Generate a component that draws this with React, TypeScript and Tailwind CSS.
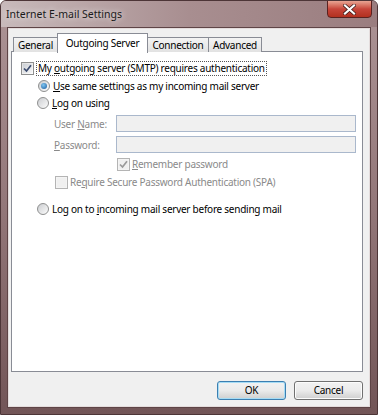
import React from "react";

const font = { fontFamily: '"Noto Sans", "Open Sans", sans-serif' };

function Check({ checked, disabled }: { checked?: boolean; disabled?: boolean }) {
  return (
    <div
      className={`w-[13px] h-[13px] shrink-0 border flex items-center justify-center ${
        disabled ? "border-[#b4b4b4] bg-[#f4f4f4]" : "border-[#8e8f8f] bg-gradient-to-br from-[#dcdcdc] to-[#ffffff]"
      }`}
    >
      <div className={`w-[9px] h-[9px] flex items-center justify-center ${disabled ? "bg-[#f0f0f0]" : "bg-gradient-to-br from-[#cbcfd5] to-[#f6f6f6]"}`}>
        {checked && (
          <svg width="9" height="9" viewBox="0 0 9 9">
            <path d="M1 4.5 L3.5 7 L8 1.2" fill="none" stroke={disabled ? "#9a9a9a" : "#3b4b6e"} strokeWidth="1.7" />
          </svg>
        )}
      </div>
    </div>
  );
}

function Radio({ checked }: { checked?: boolean }) {
  return (
    <div className="w-[12px] h-[12px] shrink-0 rounded-full border border-[#8e8f8f] bg-gradient-to-br from-[#c9cbce] to-[#ffffff] flex items-center justify-center">
      {checked ? (
        <div className="w-[6px] h-[6px] rounded-full bg-[radial-gradient(circle_at_40%_35%,#7fc6f2,#1b5a9c)]" />
      ) : (
        <div className="w-[8px] h-[8px] rounded-full bg-gradient-to-br from-[#d0d2d5] to-[#f7f7f7]" />
      )}
    </div>
  );
}

export default function App() {
  return (
    <div
      style={font}
      className="w-[378px] h-[415px] flex flex-col bg-gradient-to-b from-[#ad9496] via-[#937779] to-[#725557] border border-[#4d3537] rounded-t-[6px] overflow-hidden"
    >
      {/* title bar */}
      <div className="h-[26px] shrink-0 flex items-start bg-gradient-to-r from-[#c8babb] via-[#a88e90] to-[#9a7d7f]">
        <div className="pl-[5px] pt-[6px] text-[10.5px] leading-[14px] text-[#1a1a1a] whitespace-nowrap [text-shadow:0_0_6px_#ffffff]">
          Internet E-mail Settings
        </div>
        <div className="flex-1" />
        <div className="mr-[5px] -mt-[1px] w-[45px] h-[18px] rounded-b-[4px] border border-[#5a2220] bg-gradient-to-b from-[#e8a493] via-[#c7453a] to-[#b2301f] flex items-center justify-center">
          <svg width="13" height="11" viewBox="0 0 13 11">
            <path d="M2 1.5 L11 9.5 M11 1.5 L2 9.5" stroke="#3a1a18" strokeWidth="3.6" strokeLinecap="square" />
            <path d="M2 1.5 L11 9.5 M11 1.5 L2 9.5" stroke="#ffffff" strokeWidth="2.2" strokeLinecap="square" />
          </svg>
        </div>
      </div>

      {/* client */}
      <div className="flex-1 ml-[6px] mr-[6px] mb-[6px] border border-[#5e4446] flex">
        <div className="flex-1 bg-[#f0f0f0] border border-[#e4dcdc] flex flex-col pl-[2px] pr-[6px] pt-[3px] text-[10px] tracking-[-0.25px]">
          {/* tabs */}
          <div className="h-[20px] flex items-end pl-[2px] relative z-10">
            <div className="w-[44px] h-[15px] border border-b-0 border-r-0 border-[#898c95] bg-gradient-to-b from-[#f4f4f4] to-[#e2e2e2] flex items-center justify-center leading-[13px] whitespace-nowrap">
              General
            </div>
            <div className="w-[91px] h-[20px] -mb-[1px] border border-b-0 border-[#898c95] bg-white flex items-start justify-center pt-[2px] leading-[14px] whitespace-nowrap">
              Outgoing Server
            </div>
            <div className="w-[61px] h-[15px] border border-b-0 border-l-0 border-[#898c95] bg-gradient-to-b from-[#f4f4f4] to-[#e2e2e2] flex items-center justify-center leading-[13px] whitespace-nowrap">
              Connection
            </div>
            <div className="w-[53px] h-[15px] border border-b-0 border-l-0 border-[#898c95] bg-gradient-to-b from-[#f4f4f4] to-[#e2e2e2] flex items-center justify-center leading-[13px] whitespace-nowrap">
              Advanced
            </div>
          </div>
          {/* panel */}
          <div className="h-[321px] -mt-[1px] border border-[#898c95] bg-white flex flex-col leading-[14px] text-black whitespace-nowrap">
            <div className="mt-[8px] ml-[9px] h-[16px] flex items-center">
              <Check checked />
              <div className="ml-[2px] px-[1px] border border-dotted border-[#555] leading-[13px]">
                My <span className="underline">o</span>utgoing server (SMTP) requires authentication
              </div>
            </div>
            <div className="mt-[2px] ml-[26px] h-[16px] flex items-center">
              <Radio checked />
              <div className="ml-[3px]">
                <span className="underline">U</span>se same settings as my incoming mail server
              </div>
            </div>
            <div className="mt-[1px] ml-[25px] h-[16px] flex items-center">
              <Radio />
              <div className="ml-[3px]">
                <span className="underline">L</span>og on using
              </div>
            </div>
            <div className="mt-[4px] ml-[42px] mr-[6px] h-[17px] flex items-center">
              <div className="w-[62px] text-[#8a8a8a]">
                User <span className="underline">N</span>ame:
              </div>
              <div className="flex-1 h-[17px] border border-[#aab8cc] bg-[#f0f0f0]" />
            </div>
            <div className="mt-[4px] ml-[42px] mr-[6px] h-[17px] flex items-center">
              <div className="w-[62px] text-[#8a8a8a]">
                <span className="underline">P</span>assword:
              </div>
              <div className="flex-1 h-[17px] border border-[#aab8cc] bg-[#f0f0f0]" />
            </div>
            <div className="mt-[3px] ml-[105px] h-[16px] flex items-center">
              <Check checked disabled />
              <div className="ml-[2px] text-[#8a8a8a]">
                <span className="underline">R</span>emember password
              </div>
            </div>
            <div className="mt-[2px] ml-[43px] h-[16px] flex items-center">
              <Check disabled />
              <div className="ml-[2px] text-[#8a8a8a]">
                Re<span className="underline">q</span>uire Secure Password Authentication (SPA)
              </div>
            </div>
            <div className="mt-[11px] ml-[25px] h-[16px] flex items-center">
              <Radio />
              <div className="ml-[3px]">
                Log on to <span className="underline">i</span>ncoming mail server before sending mail
              </div>
            </div>
          </div>
          {/* buttons */}
          <div className="mt-[9px] flex justify-end gap-[8px]">
            <button className="w-[69px] h-[19px] rounded-[3px] border border-[#3c7fb1] bg-gradient-to-b from-[#f2f2f2] via-[#ebebeb] to-[#cfcfcf] leading-[15px] text-black shadow-[inset_0_0_0_1px_#a6dcf5]">
              OK
            </button>
            <button className="w-[69px] h-[19px] rounded-[3px] border border-[#707070] bg-gradient-to-b from-[#f2f2f2] via-[#ebebeb] to-[#cfcfcf] leading-[15px] text-black shadow-[inset_0_0_0_1px_#fcfcfc]">
              Cancel
            </button>
          </div>
        </div>
      </div>
    </div>
  );
}
